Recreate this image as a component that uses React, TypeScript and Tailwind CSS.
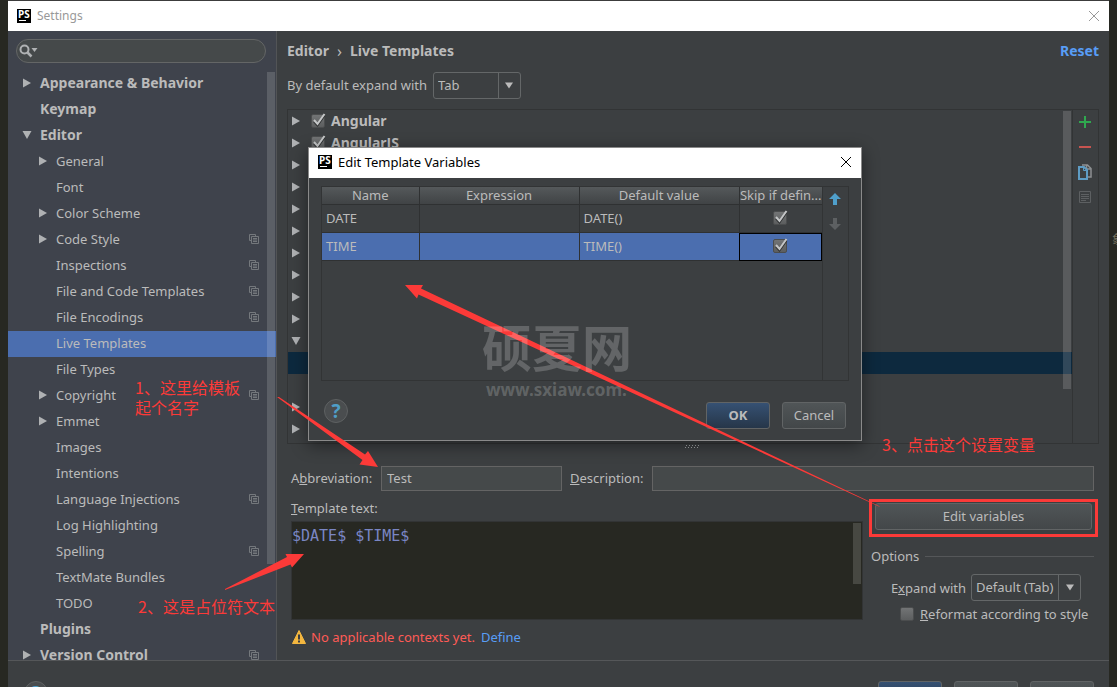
import * as React from 'react';
import clsx from 'clsx';

interface TreeItem {
  label: string;
  level: 0 | 1;
  arrow?: 'right' | 'down';
  shared?: boolean;
  selected?: boolean;
}

const TREE: TreeItem[] = [
  { label: 'Appearance & Behavior', level: 0, arrow: 'right' },
  { label: 'Keymap', level: 0 },
  { label: 'Editor', level: 0, arrow: 'down' },
  { label: 'General', level: 1, arrow: 'right' },
  { label: 'Font', level: 1 },
  { label: 'Color Scheme', level: 1, arrow: 'right' },
  { label: 'Code Style', level: 1, arrow: 'right', shared: true },
  { label: 'Inspections', level: 1, shared: true },
  { label: 'File and Code Templates', level: 1, shared: true },
  { label: 'File Encodings', level: 1, shared: true },
  { label: 'Live Templates', level: 1, selected: true },
  { label: 'File Types', level: 1 },
  { label: 'Copyright', level: 1, arrow: 'right', shared: true },
  { label: 'Emmet', level: 1, arrow: 'right' },
  { label: 'Images', level: 1 },
  { label: 'Intentions', level: 1 },
  { label: 'Language Injections', level: 1, shared: true },
  { label: 'Log Highlighting', level: 1 },
  { label: 'Spelling', level: 1, shared: true },
  { label: 'TextMate Bundles', level: 1 },
  { label: 'TODO', level: 1 },
  { label: 'Plugins', level: 0 },
  { label: 'Version Control', level: 0, arrow: 'right', shared: true },
];

interface GroupRow {
  label?: string;
  arrow?: 'right' | 'down';
  selected?: boolean;
}

const GROUPS: GroupRow[] = [
  { label: 'Angular', arrow: 'right' },
  { label: 'AngularJS', arrow: 'right' },
  { arrow: 'right' },
  { arrow: 'right' },
  { arrow: 'right' },
  { arrow: 'right' },
  { arrow: 'right' },
  { arrow: 'right' },
  { arrow: 'right' },
  { arrow: 'right' },
  { arrow: 'down' },
  { selected: true },
  {},
  { arrow: 'right' },
  { arrow: 'right' },
];

const VARIABLES = [
  { name: 'DATE', expression: '', value: 'DATE()', selected: false },
  { name: 'TIME', expression: '', value: 'TIME()', selected: true },
];

function Arrow({ dir }: { dir?: 'right' | 'down' }) {
  return (
    <svg width="10" height="10" viewBox="0 0 10 10" className="shrink-0" fill="#afb1b3" aria-hidden="true">
      {dir === 'right' && <path d="M1 0.500 9 5 1 9.500z" />}
      {dir === 'down' && <path d="M0.500 1H9.500L5 9z" />}
    </svg>
  );
}

function PsLogo() {
  return (
    <span className="flex h-3.5 w-3.5 shrink-0 flex-col bg-black pl-px text-[10px] leading-[10px] font-bold text-white">
      PS
      <span className="mt-px ml-px h-px w-[7px] bg-white" />
    </span>
  );
}

function CloseIcon() {
  return (
    <svg width="12" height="12" viewBox="0 0 12 12" fill="none" stroke="currentColor" aria-hidden="true">
      <path d="M1 1l10 10M11 1L1 11" />
    </svg>
  );
}

function SharedIcon() {
  return (
    <svg width="10" height="10" viewBox="0 0 10 10" fill="none" stroke="#74787c" className="shrink-0" aria-hidden="true">
      <path d="M2.500 6.500H.5V.5h6v2M2.500 2.500h7v7h-7zM4 4.500h4M4 6h4M4 7.500h4" />
    </svg>
  );
}

function HelpButton() {
  return (
    <button
      type="button"
      aria-label="Help"
      className="flex h-6 w-6 shrink-0 items-center justify-center rounded-full border border-[#5e6162] bg-[#4a4d4f] text-[19px] leading-none font-bold text-[#4f9ec7]"
    >
      ?
    </button>
  );
}

function Check({ label, id, checked = true }: { label?: string; id?: string; checked?: boolean }) {
  const [on, setOn] = React.useState(checked);
  return (
    <span className="inline-grid h-4 w-4 shrink-0 items-center">
      <input
        id={id}
        type="checkbox"
        aria-label={label}
        checked={on}
        onChange={() => setOn(!on)}
        className="col-start-1 row-start-1 h-3.5 w-3.5 appearance-none rounded-xs border border-[#4b4d4e] bg-linear-to-b from-[#727475] to-[#5c5e5f]"
      />
      {on && (
        <svg width="16" height="16" viewBox="0 0 16 16" fill="none" className="pointer-events-none col-start-1 row-start-1" aria-hidden="true">
          <path d="M3 8.500 6.500 12.500 13.500 2.500" stroke="#2e3031" strokeWidth="2" />
          <path d="M3 7 6.500 11 13.500 1" stroke="#c4c6c7" strokeWidth="2" />
        </svg>
      )}
    </span>
  );
}

function Combo({ id, value, className }: { id: string; value: string; className?: string }) {
  return (
    <span className={clsx('grid h-[27px] rounded-[3px] border border-[#646768]', className)}>
      <select id={id} className="col-start-1 row-start-1 h-full w-full appearance-none bg-transparent pr-6 pb-0.5 pl-1 outline-none">
        <option>{value}</option>
      </select>
      <span className="pointer-events-none col-start-1 row-start-1 flex w-[22px] items-center justify-center justify-self-end border-l border-[#646768]">
        <svg width="8" height="7" viewBox="0 0 8 7" fill="#bbbbbb" aria-hidden="true">
          <path d="M0 0.500h8L4 6.500z" />
        </svg>
      </span>
    </span>
  );
}

function PushButton({ children, primary, className }: { children?: React.ReactNode; primary?: boolean; className?: string }) {
  return (
    <button
      type="button"
      className={clsx(
        'h-[27px] rounded-[3px] border border-[#616465] bg-linear-to-b text-center leading-none',
        primary ? 'from-[#365173] to-[#263649] font-bold' : 'from-[#505557] to-[#434749]',
        className,
      )}
    >
      {children}
    </button>
  );
}

function Sidebar() {
  return (
    <aside className="flex w-[269px] shrink-0 flex-col border-r border-[#525456] bg-[#3f434c] pt-2">
      <div className="mr-2.5 ml-2 flex h-6 shrink-0 items-center rounded-full border border-[#646666] bg-[#45494a] pl-0.5">
        <svg width="20" height="14" viewBox="0 0 20 14" fill="none" aria-hidden="true">
          <circle cx="5.500" cy="5.500" r="4" stroke="#afb1b3" strokeWidth="2" />
          <path d="M8.500 8.500 12.500 12.500" stroke="#afb1b3" strokeWidth="2.500" />
          <path d="M12.500 4h6l-3 4z" fill="#afb1b3" />
        </svg>
        <input type="text" aria-label="Search settings" className="min-w-0 flex-1 bg-transparent outline-none" />
      </div>
      <div className="mt-2 grid min-h-0 flex-1 overflow-hidden">
        <ul className="col-start-1 row-start-1">
          {TREE.map((item) => (
            <li
              key={item.label}
              className={clsx(
                'flex h-[26px] items-center gap-2 pr-[17px] pb-0.5',
                item.level === 0 ? 'pl-3.5 text-[14px] font-bold' : 'pl-[30px]',
                item.selected && 'bg-[#4b6eaf]',
              )}
            >
              <Arrow dir={item.arrow} />
              <span className="flex-1 whitespace-nowrap">{item.label}</span>
              {item.shared && <SharedIcon />}
            </li>
          ))}
        </ul>
        <div className="col-start-1 row-start-1 mt-px mr-px h-[492px] w-2 justify-self-end bg-white/15" />
      </div>
    </aside>
  );
}

function TemplateList() {
  return (
    <div className="mt-2.5 mr-2.5 flex min-h-0 flex-1 border border-[#323435]">
      <div className="grid min-w-0 flex-1">
        <ul className="col-start-1 row-start-1">
          {GROUPS.map((group, i) => (
            <li key={i} className={clsx('flex h-[22px] items-center gap-2.5 pl-[3px]', group.selected && 'bg-[#0d293e]')}>
              <Arrow dir={group.arrow} />
              {group.label && (
                <span className="flex items-center gap-1 text-[14px] font-bold">
                  <Check label={group.label} />
                  {group.label}
                </span>
              )}
            </li>
          ))}
        </ul>
        <div className="col-start-1 row-start-1 mt-px mr-px h-[278px] w-2 justify-self-end bg-white/15" />
      </div>
      <div className="flex w-[26px] flex-col items-center gap-[9px] border-l border-[#323435] pt-1 pr-0.5">
        <button type="button" aria-label="Add">
          <svg width="16" height="16" viewBox="0 0 16 16" aria-hidden="true">
            <path d="M2 8h12M8 2v12" stroke="#2fa84f" strokeWidth="2" />
          </svg>
        </button>
        <button type="button" aria-label="Remove">
          <svg width="16" height="16" viewBox="0 0 16 16" aria-hidden="true">
            <path d="M2 8h12" stroke="#c75450" strokeWidth="2" />
          </svg>
        </button>
        <button type="button" aria-label="Duplicate">
          <svg width="16" height="16" viewBox="0 0 16 16" fill="none" aria-hidden="true">
            <path d="M5 1h5.500l3.500 3.500V13h-3M9.500 1v4H14" stroke="#8d9092" strokeWidth="1.500" />
            <path d="M2 3h5l3 3v9H2z" fill="#3c3f41" stroke="#5e9cc4" strokeWidth="2" />
            <path d="M6.500 3.500v3H10" stroke="#5e9cc4" />
          </svg>
        </button>
        <button type="button" aria-label="Restore defaults">
          <svg width="16" height="16" viewBox="0 0 16 16" fill="none" stroke="#5d6062" aria-hidden="true">
            <path d="M2.500 2.500h11v11h-11zM4 5.500h8M4 7.500h8M4 9.500h8M4 11.500h5" />
          </svg>
        </button>
      </div>
    </div>
  );
}

function TemplateForm() {
  return (
    <div className="mr-[11px] flex shrink-0 flex-col pl-1">
      <div className="flex h-[22px] justify-center pt-px pr-1">
        <svg width="16" height="4" viewBox="0 0 16 4" stroke="#a4a6a7" strokeDasharray="1 2" aria-hidden="true">
          <path d="M1 .5h14M0 2.500h14" />
        </svg>
      </div>
      <div className="flex items-center pr-1">
        <label htmlFor="abbreviation" className="w-[90px] pb-0.5 whitespace-nowrap">
          A<u>b</u>breviation:
        </label>
        <input id="abbreviation" type="text" defaultValue="Test" className="h-[25px] w-[181px] border border-[#646464] bg-[#45494a] px-[5px] pb-0.5 outline-none" />
        <label htmlFor="description" className="w-[90px] pb-0.5 pl-2 whitespace-nowrap">
          <u>D</u>escription:
        </label>
        <input id="description" type="text" className="h-[25px] min-w-0 flex-1 border border-[#646464] bg-[#45494a] px-[5px] outline-none" />
      </div>
      <div className="flex">
        <div className="flex min-w-0 flex-1 flex-col">
          <label htmlFor="template-text" className="pt-[5px] pb-px leading-6">
            <u>T</u>emplate text:
          </label>
          <div className="grid h-[99px] border border-[#323435] bg-[#272822]">
            <textarea
              id="template-text"
              spellCheck={false}
              defaultValue="$DATE$ $TIME$"
              className="col-start-1 row-start-1 resize-none bg-transparent pt-1 text-[15px] leading-5 text-[#7a86c4] outline-none [font-family:'DejaVu_Sans_Mono',monospace]"
            />
            <div className="col-start-1 row-start-1 mt-px mr-px h-[61px] w-2 justify-self-end bg-white/15" />
          </div>
          <p className="flex h-10 items-center pb-1.5 whitespace-nowrap text-[#ff5b56]">
            <svg width="14" height="14" viewBox="0 0 14 14" className="mr-[5px] ml-px" aria-hidden="true">
              <path d="M7 0.500 13.500 13.500H.5z" fill="#f4b73f" stroke="#f4b73f" strokeLinejoin="round" />
              <path d="M7 4.500v5M7 10.500v2" stroke="#3c3f41" strokeWidth="2" />
            </svg>
            No applicable contexts yet.
            <a href="#define" className="ml-1.5 text-[#589df6]">
              Define
            </a>
          </p>
        </div>
        <div className="ml-1.5 flex w-[229px] shrink-0 flex-col pt-2">
          <div className="flex border-[3px] border-[#fc3a38] pt-px pr-[3px] pb-1 pl-[3px]">
            <PushButton className="flex-1">Edit variables</PushButton>
          </div>
          <fieldset className="pr-1 pl-0.5">
            <legend className="flex w-full items-center gap-1.5 pt-[7px] leading-6">
              Options
              <span className="h-px flex-1 bg-[#555759]" />
            </legend>
            <div className="flex items-center justify-end gap-[5px] pt-1.5 pr-[13px] whitespace-nowrap">
              <label htmlFor="expand-with">
                E<u>x</u>pand with
              </label>
              <Combo id="expand-with" value="Default (Tab)" className="w-[110px]" />
            </div>
            <label htmlFor="reformat" className="flex h-[26px] items-center gap-1 pl-[29px] whitespace-nowrap">
              <Check id="reformat" checked={false} />
              <span>
                <u>R</u>eformat according to style
              </span>
            </label>
          </fieldset>
        </div>
      </div>
    </div>
  );
}

function VariablesDialog() {
  return (
    <section
      role="dialog"
      aria-label="Edit Template Variables"
      className="absolute top-[147px] left-[308px] flex h-[294px] w-[554px] flex-col border border-[#8a8a8a] bg-[#3c3f41] shadow-[0_4px_16px_rgba(0,0,0,0.45)]"
    >
      <header className="flex h-[30px] shrink-0 items-center gap-1.5 bg-white pr-[9px] pb-0.5 pl-[9px] text-black">
        <PsLogo />
        <h2 className="flex-1">Edit Template Variables</h2>
        <button type="button" aria-label="Close">
          <CloseIcon />
        </button>
      </header>
      <div className="mx-3 mt-2 flex min-h-0 flex-1 border border-[#323435]">
        <div className="min-w-0 flex-1 border-r border-[#323435]">
          <table className="w-full table-fixed border-collapse">
            <colgroup>
              <col className="w-[97px]" />
              <col className="w-40" />
              <col className="w-40" />
              <col />
            </colgroup>
            <thead>
              <tr className="bg-linear-to-b from-[#55595b] to-[#3f4244] leading-[17px]">
                {['Name', 'Expression', 'Default value', 'Skip if defin...'].map((title) => (
                  <th key={title} className="border-r border-b border-[#2f3132] p-0 font-normal whitespace-nowrap last:border-r-0">
                    {title}
                  </th>
                ))}
              </tr>
            </thead>
            <tbody>
              {VARIABLES.map((row) => (
                <tr key={row.name} className={clsx('h-7', row.selected && 'bg-[#4b6eaf]')}>
                  <td className="border-r border-b border-[#2f3132] p-0 pb-0.5 pl-1">{row.name}</td>
                  <td className="border-r border-b border-[#2f3132] p-0 pb-0.5 pl-1">{row.expression}</td>
                  <td className="border-r border-b border-[#2f3132] p-0 pb-0.5 pl-1">{row.value}</td>
                  <td
                    className={clsx(
                      'border-b border-[#2f3132] p-0 pb-0.5 text-center',
                      row.selected && 'outline-1 -outline-offset-1 outline-black',
                    )}
                  >
                    <span className="flex justify-center">
                      <Check label={`Skip ${row.name} if defined`} />
                    </span>
                  </td>
                </tr>
              ))}
            </tbody>
          </table>
        </div>
        <div className="flex w-[25px] flex-col items-center gap-[13px] pt-1.5 pr-0.5">
          <button type="button" aria-label="Move up">
            <svg width="12" height="12" viewBox="0 0 12 12" fill="#4f9fcb" aria-hidden="true">
              <path d="M6 0l6 6H8v6H4V6H0z" />
            </svg>
          </button>
          <button type="button" aria-label="Move down">
            <svg width="12" height="12" viewBox="0 0 12 12" fill="#5d6062" aria-hidden="true">
              <path d="M6 12l6-6H8V0H4v6H0z" />
            </svg>
          </button>
        </div>
      </div>
      <footer className="flex h-[59px] shrink-0 items-start justify-between px-[15px] pt-[18px]">
        <HelpButton />
        <div className="flex gap-3 pt-[3px]">
          <PushButton primary className="w-16">
            OK
          </PushButton>
          <PushButton className="w-16">Cancel</PushButton>
        </div>
      </footer>
    </section>
  );
}

// Red arrows, notes and the site mark that lie over both windows
function Annotations() {
  return (
    <div className="pointer-events-none absolute inset-0 overflow-hidden text-[16px] leading-5 whitespace-nowrap text-[#fc3a38] [font-family:'Noto_Sans_CJK_SC',sans-serif]">
      <svg width="1117" height="687" viewBox="0 0 1117 687" fill="#fc3a38" className="absolute top-0 left-0 max-w-none" aria-hidden="true">
        <path d="M277 397 279 397 365 454.500 368 451 378 467 359.500 464.500 362.500 460z" />
        <path d="M225 590 225 589 287 557 285.500 554 304 554 292 567.500 290.500 564.500z" />
        <path d="M880 507 879 506 421 288.500 423 285 405 285 417 298.500 418.500 294.500z" />
      </svg>
      <p className="absolute top-[377px] left-[135px]">
        1、这里给模板
        <br />
        起个名字
      </p>
      <p className="absolute top-[596px] left-[138px]">2、这是占位符文本</p>
      <p className="absolute top-[434px] left-[882px]">3、点击这个设置变量</p>
      <div className="absolute top-[315px] left-[482px] text-white/20">
        <p className="text-[50px] leading-[60px] font-bold">硕夏网</p>
        <p className="pt-[3px] pl-1 text-[17px] leading-6 font-bold [font-family:'Noto_Sans',sans-serif]">www.sxiaw.com.</p>
      </div>
    </div>
  );
}

export default function App() {
  return (
    <div className="relative h-screen overflow-hidden bg-[#272822] px-2 text-[13px] leading-5 text-[#bbbbbb] [font-family:'Noto_Sans','Noto_Sans_CJK_SC',sans-serif]">
      {/* Editor line that shows past the window's edge */}
      <span className="absolute top-[230px] right-0 w-[5px] overflow-hidden text-[12px] text-[#75715e]">象</span>
      <div className="flex h-[calc(100vh+32px)] flex-col border-t border-[#3c3c3c] bg-[#3c3f41]">
        <header className="flex h-[30px] shrink-0 items-center gap-1.5 bg-white pr-[9px] pl-[9px] text-[12px] text-[#999999]">
          <PsLogo />
          <h1 className="flex-1">Settings</h1>
          <button type="button" aria-label="Close">
            <CloseIcon />
          </button>
        </header>
        <div className="flex min-h-0 flex-1">
          <Sidebar />
          <main className="flex min-w-0 flex-1 flex-col pt-2.5 pl-2.5">
            <div className="flex pr-2.5 text-[14px] font-bold">
              <span>Editor</span>
              <span className="px-2 text-[16px] font-normal">›</span>
              <span className="flex-1">Live Templates</span>
              <a href="#reset" className="text-[#589df6]">
                Reset
              </a>
            </div>
            <div className="mt-[11px] flex items-center gap-1.5">
              <label htmlFor="default-expand" className="pb-0.5">
                By default expand with
              </label>
              <Combo id="default-expand" value="Tab" className="w-[88px]" />
            </div>
            <TemplateList />
            <TemplateForm />
          </main>
        </div>
        <footer className="flex h-[59px] shrink-0 items-start gap-3 border-t border-[#555759] pt-5 pr-[15px] pl-4">
          <HelpButton />
          <span className="flex-1" />
          <PushButton primary className="w-16">
            OK
          </PushButton>
          <PushButton className="w-16">Cancel</PushButton>
          <PushButton className="w-16">Apply</PushButton>
        </footer>
      </div>
      <VariablesDialog />
      <Annotations />
    </div>
  );
}
